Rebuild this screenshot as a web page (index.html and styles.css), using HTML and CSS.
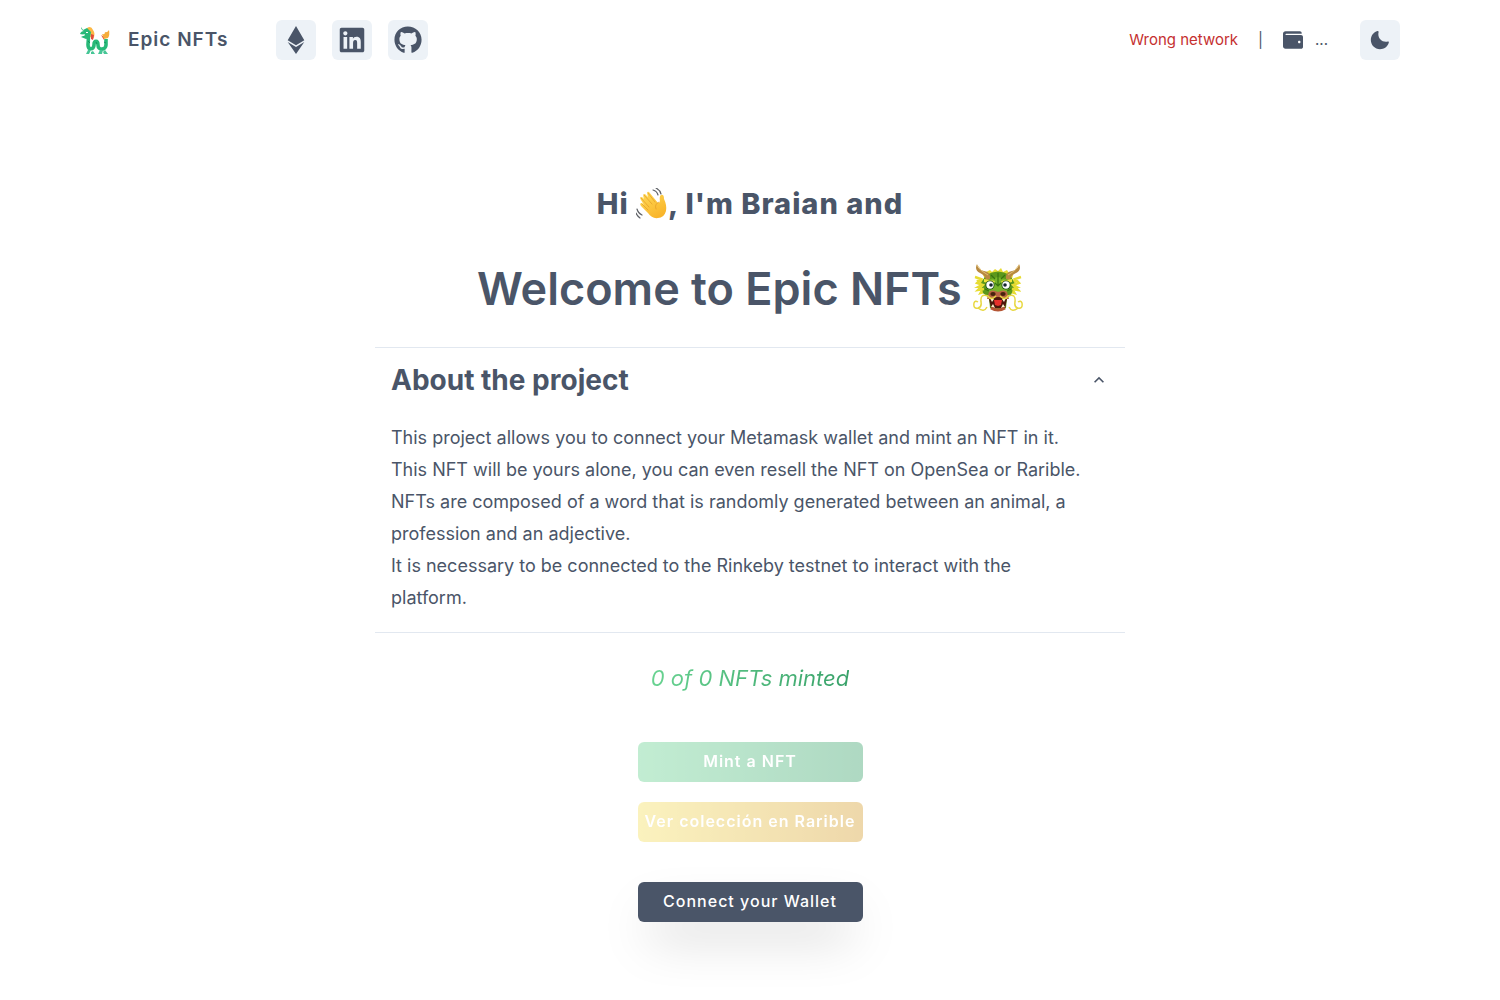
FILE: index.html
```html
<!DOCTYPE html>
<html lang="en">
<head>
<meta charset="utf-8">
<meta name="viewport" content="width=device-width, initial-scale=1">
<title>Epic NFTs</title>
<link rel="stylesheet" href="styles.css">
</head>
<body>
<header class="navbar">
  <div class="brand">
    <svg class="brand-logo" viewBox="0 0 30 30" aria-hidden="true">
      <path d="M8 11C9 14 8 16 8 20C8 25 14 25 14 20C14 15 18 15 18 20C18 26 26 25 26 20V14" fill="none" stroke="#28b978" stroke-width="3.6"/>
      <path d="M7 3Q11 0 13 5Q16 9 13 14L10 12Q11 7 7 5Z" fill="#fdb844"/>
      <path d="M11 9L14 10L13 15L11 14ZM21 10L24 12L24 15Z" fill="#e34b3b"/>
      <path d="M22 9Q25 10 25 7Q27 8 29 5Q30 10 28 13L24 14Z" fill="#f5ac3b"/>
      <path d="M1 2L3 5L7 3L11 7L10 13L6 14L1 12L5 10L0 9Q1 6 4 6Q1 5 1 2Z" fill="#28b978"/>
      <path d="M2 10L5 9L4 11ZM6 7H8V8H6Z" fill="#fff"/>
      <path d="M8 25H11L9 29H6ZM13 26L15 29H11L11 27ZM20 25H23L22 29H18ZM25 25L28 29H24L23 27Z" fill="#46c696"/>
      <path d="M8 16L10 18M16 17L17 19M24 17L26 18" stroke="#14945f" stroke-width="1"/>
    </svg>
    <span class="brand-name">Epic NFTs</span>
  </div>
  <nav class="links" aria-label="Links">
    <a class="icon-button" href="#contract" aria-label="Ethereum contract"><svg class="icon-large" viewBox="0 0 320 512" aria-hidden="true"><path d="M311.9 260.8L160 353.6 8 260.8 160 0l151.9 260.8zM160 383.4L8 290.6 160 512l152-221.4-152 92.8z"/></svg></a>
    <a class="icon-button" href="#linkedin" aria-label="LinkedIn"><svg class="icon-large" viewBox="0 0 448 512" aria-hidden="true"><path d="M416 32H31.9C14.3 32 0 46.5 0 64.3v383.4C0 465.5 14.3 480 31.9 480H416c17.6 0 32-14.5 32-32.3V64.3c0-17.8-14.4-32.3-32-32.3zM135.4 416H69V202.2h66.5V416zm-33.2-243c-21.3 0-38.5-17.3-38.5-38.5S80.9 96 102.2 96c21.2 0 38.5 17.3 38.5 38.5 0 21.3-17.2 38.5-38.5 38.5zm282.1 243h-66.4V312c0-24.8-.5-56.7-34.5-56.7-34.6 0-39.9 27-39.9 54.9V416h-66.4V202.2h63.7v29.2h.9c8.9-16.8 30.6-34.5 62.9-34.5 67.2 0 79.7 44.3 79.7 101.9V416z"/></svg></a>
    <a class="icon-button" href="#github" aria-label="GitHub"><svg class="icon-large" viewBox="0 0 496 512" aria-hidden="true"><path d="M165.9 397.4c0 2-2.3 3.6-5.2 3.6-3.3.3-5.6-1.3-5.6-3.6 0-2 2.3-3.6 5.2-3.6 3-.3 5.6 1.3 5.6 3.6zm-31.1-4.5c-.7 2 1.3 4.3 4.3 4.9 2.6 1 5.6 0 6.2-2s-1.3-4.3-4.3-5.2c-2.6-.7-5.5.3-6.2 2.3zm44.2-1.7c-2.9.7-4.9 2.6-4.6 4.9.3 2 2.9 3.3 5.9 2.6 2.9-.7 4.9-2.6 4.6-4.6-.3-1.9-3-3.2-5.9-2.9zM244.8 8C106.1 8 0 113.3 0 252c0 110.9 69.8 205.8 169.5 239.2 12.8 2.3 17.3-5.6 17.3-12.1 0-6.2-.3-40.4-.3-61.4 0 0-70 15-84.7-29.8 0 0-11.4-29.1-27.8-36.6 0 0-22.9-15.7 1.6-15.4 0 0 24.9 2 38.6 25.8 21.9 38.6 58.6 27.5 72.9 20.9 2.3-16 8.8-27.1 16-33.7-55.9-6.2-112.3-14.3-112.3-110.5 0-27.5 7.6-41.3 23.6-58.9-2.6-6.5-11.1-33.3 2.6-67.9 20.9-6.5 69 27 69 27 20-5.6 41.5-8.5 62.8-8.5s42.8 2.9 62.8 8.5c0 0 48.1-33.6 69-27 13.7 34.7 5.2 61.4 2.6 67.9 16 17.7 25.8 31.5 25.8 58.9 0 96.5-58.9 104.2-114.8 110.5 9.2 7.9 17 22.9 17 46.4 0 33.7-.3 75.4-.3 83.6 0 6.5 4.6 14.4 17.3 12.1C428.2 457.8 496 362.9 496 252 496 113.3 383.5 8 244.8 8z"/></svg></a>
  </nav>
  <div class="account">
    <span class="network">Wrong network</span>
    <span>|</span>
    <span class="wallet"><svg class="icon" viewBox="0 0 512 512" aria-hidden="true"><path d="M461.2 128H80c-8.84 0-16-7.16-16-16s7.16-16 16-16h384c8.84 0 16-7.16 16-16 0-26.51-21.49-48-48-48H64C28.65 32 0 60.65 0 96v320c0 35.35 28.65 64 64 64h397.2c28.02 0 50.8-21.53 50.8-48V176c0-26.47-22.78-48-50.8-48zM416 336c-17.67 0-32-14.33-32-32s14.33-32 32-32 32 14.33 32 32-14.33 32-32 32z"/></svg><span>...</span></span>
  </div>
  <button class="icon-button" type="button" aria-label="Dark mode"><svg class="icon" viewBox="0 0 24 24" aria-hidden="true"><path d="M21.4,13.7C20.6,13.9,19.8,14,19,14c-5,0-9-4-9-9c0-0.8,0.1-1.6,0.3-2.4c0.1-0.3,0-0.7-0.3-1 c-0.3-0.3-0.6-0.4-1-0.3C4.3,2.7,1,7.1,1,12c0,6.1,4.9,11,11,11c4.9,0,9.3-3.3,10.6-8.1c0.1-0.3,0-0.7-0.3-1 C22.1,13.7,21.7,13.6,21.4,13.7z"/></svg></button>
</header>

<main class="content">
  <h2 class="greeting">Hi <svg class="wave" viewBox="0 0 32 32" role="img" aria-label="waving hand">
    <defs><linearGradient id="skin" x1="0" y1="0" x2="0.6" y2="1"><stop offset="0" stop-color="#ffdc58"/><stop offset="1" stop-color="#f9b52b"/></linearGradient></defs>
    <path d="M5 12Q3 9 6 9L8 11Q6 6 9 6L12 9Q10 3 13 4L22 15L24 14Q23 8 25 7Q28 6 28 11Q31 17 30 23Q28 30 22 30Q16 31 12 25L5 18Q3 15 6 15L8 17L5 12Z" fill="url(#skin)"/>
    <path d="M5 10L13 19M8 7L16 16M12 5L19 14M6 16L12 22M23 14Q18 16 20 21" fill="none" stroke="#e5a02b" stroke-width="0.8" stroke-linecap="round"/>
    <path d="M17 2Q21 3 22 7M20 0Q24 2 25 6M1 21Q2 25 6 27M0 25Q1 28 4 30" fill="none" stroke="#5f6267" stroke-width="1.2" stroke-linecap="round"/>
  </svg>, I'm Braian and</h2>
  <h1 class="title">Welcome to Epic NFTs <svg class="dragon" viewBox="0 0 50 50" role="img" aria-label="dragon">
    <path d="M13 9L17 7L19 9L22 6L25 8L28 5L30 9L34 7L36 10L41 8L39 16L46 18L41 21L48 25L40 25L44 32L37 30L34 36H16L12 30L5 32L9 25L1 25L8 21L3 17L12 16L8 8Z" fill="#e7dc32"/>
    <path d="M13 12Q25 5 37 12L42 21L38 32L34 35L33 45Q25 51 17 45L16 35L10 30L8 20Z" fill="#5c981c"/>
    <path d="M14 17L25 14L36 17L34 31H16Z" fill="#77b52a"/>
    <path d="M18 12L22 16M32 12L28 16M25 10V22M22 20L25 23L28 20M12 26L16 28M38 26L34 28" fill="none" stroke="#37740f" stroke-width="1.2"/>
    <path d="M4 1Q5 7 11 8Q18 9 17 16L13 17Q12 12 7 10Q1 7 4 1ZM46 1Q45 7 39 8Q32 9 33 16L37 17Q38 12 43 10Q49 7 46 1Z" fill="#b88a40"/>
    <path d="M4 2Q7 8 15 12M46 2Q43 8 35 12" fill="none" stroke="#dfbd72" stroke-width="1"/>
    <path d="M2 14L8 16L4 20L10 22L5 27L11 26M48 14L42 16L46 20L40 22L45 27L39 26" fill="none" stroke="#e7dc32" stroke-width="2.4"/>
    <path d="M11 16L22 18L20 21L11 19ZM39 16L28 18L30 21L39 19Z" fill="#f1e63b"/>
    <circle cx="17" cy="22" r="4.5" fill="#17490f"/><circle cx="33" cy="22" r="4.5" fill="#17490f"/>
    <circle cx="17" cy="22" r="3.7" fill="#fff"/><circle cx="33" cy="22" r="3.7" fill="#fff"/>
    <circle cx="18" cy="22" r="1.8" fill="#14252f"/><circle cx="32" cy="22" r="1.8" fill="#14252f"/>
    <path d="M16 29Q19 26 25 29Q31 26 34 29L36 36H14Z" fill="#b96643"/>
    <ellipse cx="20" cy="31" rx="2.7" ry="2" fill="#48230d"/><ellipse cx="30" cy="31" rx="2.7" ry="2" fill="#48230d"/>
    <path d="M16 36Q25 32 34 36L32 45H18Z" fill="#4d170b"/>
    <path d="M21 37H29L28 42L25 43L22 42Z" fill="#e8302b"/>
    <path d="M17 35L19 39L21 36ZM29 36L31 39L33 35ZM18 44L20 41L22 45ZM28 45L30 41L32 44Z" fill="#fff2ce"/>
    <path d="M18 45Q25 49 32 45" fill="none" stroke="#b55635" stroke-width="3"/>
    <path d="M23 33Q18 38 15 33Q7 30 8 39Q9 44 5 45Q0 46 1 40Q2 37 5 39M5 45Q11 50 14 44M27 33Q32 38 35 33Q43 30 42 39Q41 44 45 45Q50 46 49 40Q48 37 45 39M45 45Q39 50 36 44" fill="none" stroke="#e8d843" stroke-width="1.5"/>
  </svg></h1>

  <section class="accordion">
    <h2 class="accordion-heading">
      <button class="accordion-button" type="button" aria-expanded="true" aria-controls="about">
        <span>About the project</span>
        <svg class="icon" viewBox="0 0 24 24" aria-hidden="true"><path d="M12 8L18 14L16.600 15.400L12 10.800L7.400 15.400L6 14Z"/></svg>
      </button>
    </h2>
    <p class="accordion-panel" id="about">This project allows you to connect your Metamask wallet and mint an NFT in it.<br>
      This NFT will be yours alone, you can even resell the NFT on OpenSea or Rarible.<br>
      NFTs are composed of a word that is randomly generated between an animal, a profession and an adjective.<br>
      It is necessary to be connected to the Rinkeby testnet to interact with the<br>
      platform.</p>
  </section>

  <p class="minted">0 of 0 NFTs minted</p>
  <div class="actions">
    <button class="button button-mint" type="button" disabled>Mint a NFT</button>
    <button class="button button-rarible" type="button" disabled>Ver colección en Rarible</button>
    <button class="button button-connect" type="button">Connect your Wallet</button>
  </div>
</main>
</body>
</html>
```
FILE: styles.css
```css
* {
  box-sizing: border-box;
}

body {
  margin: 0;
  background: #fff;
  color: #4a5568;
  font: 15px/24px Inter, "Liberation Sans", sans-serif;
}

h1, h2, p {
  margin: 0;
}

button {
  border: 0;
  color: inherit;
  font: inherit;
  cursor: pointer;
}

svg {
  fill: currentColor;
}

.navbar {
  display: flex;
  align-items: center;
  padding: 20px 100px 20px 80px;
}

.brand {
  display: flex;
  align-items: center;
  gap: 18px;
}

.brand-logo {
  width: 30px;
  height: 30px;
}

.brand-name {
  font-size: 19px;
  font-weight: 600;
  letter-spacing: 1px;
}

.links {
  display: flex;
  gap: 16px;
  margin-left: 48px;
}

.icon-button {
  display: flex;
  align-items: center;
  justify-content: center;
  width: 40px;
  height: 40px;
  padding: 0;
  border-radius: 6px;
  background: #edf2f7;
  color: inherit;
}

.icon {
  width: 20px;
  height: 20px;
}

.icon-large {
  width: 28px;
  height: 28px;
}

.account {
  display: flex;
  align-items: center;
  gap: 20px;
  margin: 0 32px 0 auto;
}

.network {
  color: #c53030;
}

.wallet {
  display: flex;
  align-items: center;
  gap: 12px;
}

.content {
  display: flex;
  flex-direction: column;
  align-items: center;
  max-width: 750px;
  margin: 0 auto;
  padding: 104px 0 76px;
}

.greeting {
  font-size: 29px;
  font-weight: 800;
  line-height: 40px;
  letter-spacing: 1px;
}

.wave {
  width: 32px;
  height: 32px;
  vertical-align: -6px;
}

.title {
  margin-top: 36px;
  font-size: 45px;
  font-weight: 600;
  line-height: 58px;
}

.dragon {
  width: 50px;
  height: 50px;
  vertical-align: -8px;
}

.accordion {
  width: 100%;
  margin-top: 29px;
  border: solid #e2e8f0;
  border-width: 1px 0;
}

.accordion-heading {
  font-size: 28px;
  line-height: 48px;
}

.accordion-button {
  display: flex;
  align-items: center;
  justify-content: space-between;
  width: 100%;
  padding: 8px 16px;
  background: transparent;
}

.accordion-panel {
  padding: 10px 16px 18px;
  font-size: 18px;
  line-height: 32px;
}

.minted {
  margin-top: 27px;
  background: linear-gradient(to right, #68d391, #38a169);
  background-clip: text;
  color: transparent;
  font-size: 22px;
  font-style: italic;
  line-height: 36px;
}

.actions {
  display: flex;
  flex-direction: column;
  gap: 20px;
  width: 225px;
  margin-top: 46px;
}

.button {
  height: 40px;
  padding: 0 0 2px;
  border-radius: 6px;
  color: #fff;
  font-size: 16px;
  font-weight: 600;
  letter-spacing: 1px;
  white-space: nowrap;
}

.button:disabled {
  opacity: 0.4;
  cursor: not-allowed;
}

.button-mint {
  background: linear-gradient(to right, #68d391, #38a169);
}

.button-rarible {
  background: linear-gradient(to right, #f6e05e, #d69e2e);
}

.button-connect {
  margin-top: 20px;
  background: #4a5568;
  box-shadow: 0 25px 50px -12px rgba(0, 0, 0, 0.25);
  font-weight: 500;
}
```
